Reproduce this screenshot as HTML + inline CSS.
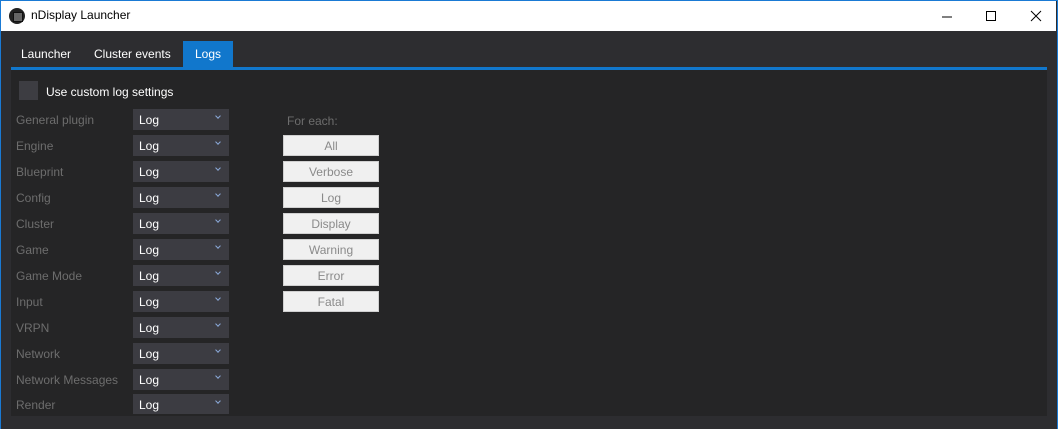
<!DOCTYPE html>
<html><head><style>
*{margin:0;padding:0;box-sizing:border-box}
body{width:1058px;height:429px;overflow:hidden;background:#2d2d30;font-family:"Segoe UI","Liberation Sans",sans-serif;font-size:12px;position:relative}
.win{position:absolute;left:0;top:0;width:1058px;height:429px;border:1px solid #1a7ad4;border-bottom:none}
.title{position:absolute;left:1px;top:1px;width:1055px;height:30px;background:#fff;color:#000}
.title span{position:absolute;left:30px;top:7px;font-size:12px}
.icon{position:absolute;left:8px;top:7px;width:16px;height:16px;border-radius:50%;background:#222;}
.icon:after{content:"";position:absolute;left:4px;top:4px;width:8px;height:8px;background:#666;border:1px solid #111}
.tab{position:absolute;top:41px;height:26px;color:#fff;font-size:12px;line-height:26px;padding:0 10px}
.line{position:absolute;left:11px;top:67px;width:1036px;height:3px;background:#1177cc}
.panel{position:absolute;left:11px;top:70px;width:1036px;height:346px;background:#252526}
.cb{position:absolute;left:19px;top:81px;width:19px;height:19px;background:#3d3d42}
.lbl{position:absolute;left:16px;color:#6d6d6d;font-size:12px}
.sel{position:absolute;left:133px;width:96px;height:21px;background:#3c3c42;color:#fff;font-size:12px;line-height:23px;padding-left:6px}
.sel:after{content:"";position:absolute;right:9px;top:5px;width:3px;height:3px;border-right:1px solid #8aa8d8;border-bottom:1px solid #8aa8d8;transform:rotate(45deg)}
.btn{position:absolute;left:283px;width:96px;height:21px;background:#f0f0f0;border:1px solid #d0d0d0;color:#8a8a8a;text-align:center;line-height:21px;font-size:12px}
</style></head><body>
<div class="win"></div>
<div class="title"><div class="icon"></div><span>nDisplay Launcher</span>
<svg style="position:absolute;left:935px;top:9px" width="120" height="14"><line x1="6" y1="7" x2="16" y2="7" stroke="#000"/><rect x="50.5" y="1.5" width="9" height="9" fill="none" stroke="#000"/><path d="M95 1L105 11M105 1L95 11" stroke="#000"/></svg></div>
<div class="tab" style="left:11px">Launcher</div>
<div class="tab" style="left:84px">Cluster events</div>
<div class="tab" style="left:183px;width:50px;background:#1177cc;text-align:center;padding:0">Logs</div>
<div class="line"></div>
<div class="panel"></div>
<div class="cb"></div>
<div style="position:absolute;left:46px;top:85px;color:#fff;font-size:12px">Use custom log settings</div>
<div class="lbl" style="left:287px;top:114px">For each:</div>
<div class="lbl" style="top:113px">General plugin</div><div class="sel" style="top:109px">Log</div>
<div class="lbl" style="top:139px">Engine</div><div class="sel" style="top:135px">Log</div>
<div class="lbl" style="top:165px">Blueprint</div><div class="sel" style="top:161px">Log</div>
<div class="lbl" style="top:191px">Config</div><div class="sel" style="top:187px">Log</div>
<div class="lbl" style="top:217px">Cluster</div><div class="sel" style="top:213px">Log</div>
<div class="lbl" style="top:243px">Game</div><div class="sel" style="top:239px">Log</div>
<div class="lbl" style="top:269px">Game Mode</div><div class="sel" style="top:265px">Log</div>
<div class="lbl" style="top:295px">Input</div><div class="sel" style="top:291px">Log</div>
<div class="lbl" style="top:321px">VRPN</div><div class="sel" style="top:317px">Log</div>
<div class="lbl" style="top:347px">Network</div><div class="sel" style="top:343px">Log</div>
<div class="lbl" style="top:373px">Network Messages</div><div class="sel" style="top:369px">Log</div>
<div class="lbl" style="top:398px">Render</div><div class="sel" style="top:394px;height:20px">Log</div>
<div class="btn" style="top:135px">All</div>
<div class="btn" style="top:161px">Verbose</div>
<div class="btn" style="top:187px">Log</div>
<div class="btn" style="top:213px">Display</div>
<div class="btn" style="top:239px">Warning</div>
<div class="btn" style="top:265px">Error</div>
<div class="btn" style="top:291px">Fatal</div>
</body></html>
